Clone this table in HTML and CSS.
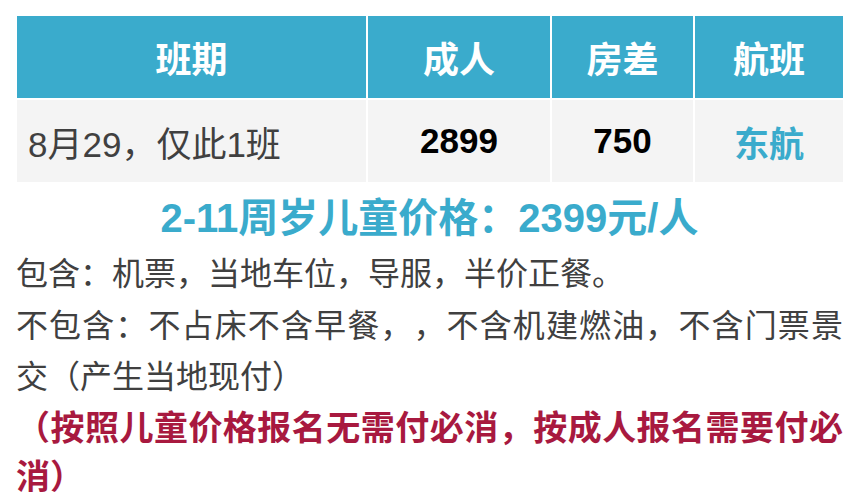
FILE: index.html
```html
<!DOCTYPE html>
<html lang="zh-CN">
<head>
<meta charset="utf-8">
<title>班期价格</title>
<link rel="stylesheet" href="styles.css">
</head>
<body>
<div class="page">
  <div class="table">
    <div class="th">班期</div>
    <div class="th">成人</div>
    <div class="th">房差</div>
    <div class="th">航班</div>
    <div class="td td-date">8月29，仅此1班</div>
    <div class="td td-num">2899</div>
    <div class="td td-num">750</div>
    <div class="td td-air">东航</div>
  </div>
  <div class="child-price">2-11周岁儿童价格：2399元/人</div>
  <p class="info">包含：机票，当地车位，导服，半价正餐。<br>不包含：不占床不含早餐，，不含机建燃油，不含门票景交（产生当地现付）</p>
  <p class="notice">（按照儿童价格报名无需付必消，按成人报名需要付必消）</p>
</div>
</body>
</html>
```

FILE: styles.css
```css
html, body {
  margin: 0;
  padding: 0;
  background: #ffffff;
}

.page {
  width: 827px;
  margin-left: 16px;
  padding-top: 16px;
  font-family: "Liberation Sans", "Noto Sans CJK SC", sans-serif;
  text-spacing-trim: space-all;
}

.table {
  margin-left: 1px;
  display: grid;
  grid-template-columns: 349px 182px 141px 148px;
  grid-template-rows: 82px 82px;
  column-gap: 2px;
  row-gap: 2px;
}

.th {
  background: #3aabcc;
  color: #ffffff;
  font-weight: bold;
  font-size: 36px;
  display: flex;
  align-items: center;
  justify-content: center;
}

.td {
  background: #f4f4f4;
  font-size: 35px;
  display: flex;
  align-items: center;
  justify-content: center;
}

.td-date {
  justify-content: flex-start;
  padding-left: 11px;
  color: #404040;
}

.td-num {
  font-weight: bold;
  color: #000000;
}

.td-air {
  font-weight: bold;
  color: #3aabcc;
}

.child-price {
  margin-top: 5px;
  text-align: center;
  font-size: 40px;
  font-weight: bold;
  color: #3aabcc;
  line-height: 62px;
}

.info {
  margin: 0;
  font-size: 32px;
  line-height: 51.5px;
  color: #404040;
  text-align: justify;
  text-spacing-trim: space-all;
}

.notice {
  margin: 0;
  font-size: 34px;
  line-height: 49px;
  font-weight: bold;
  color: #a8193f;
  text-align: justify;
  text-spacing-trim: space-all;
}
```
